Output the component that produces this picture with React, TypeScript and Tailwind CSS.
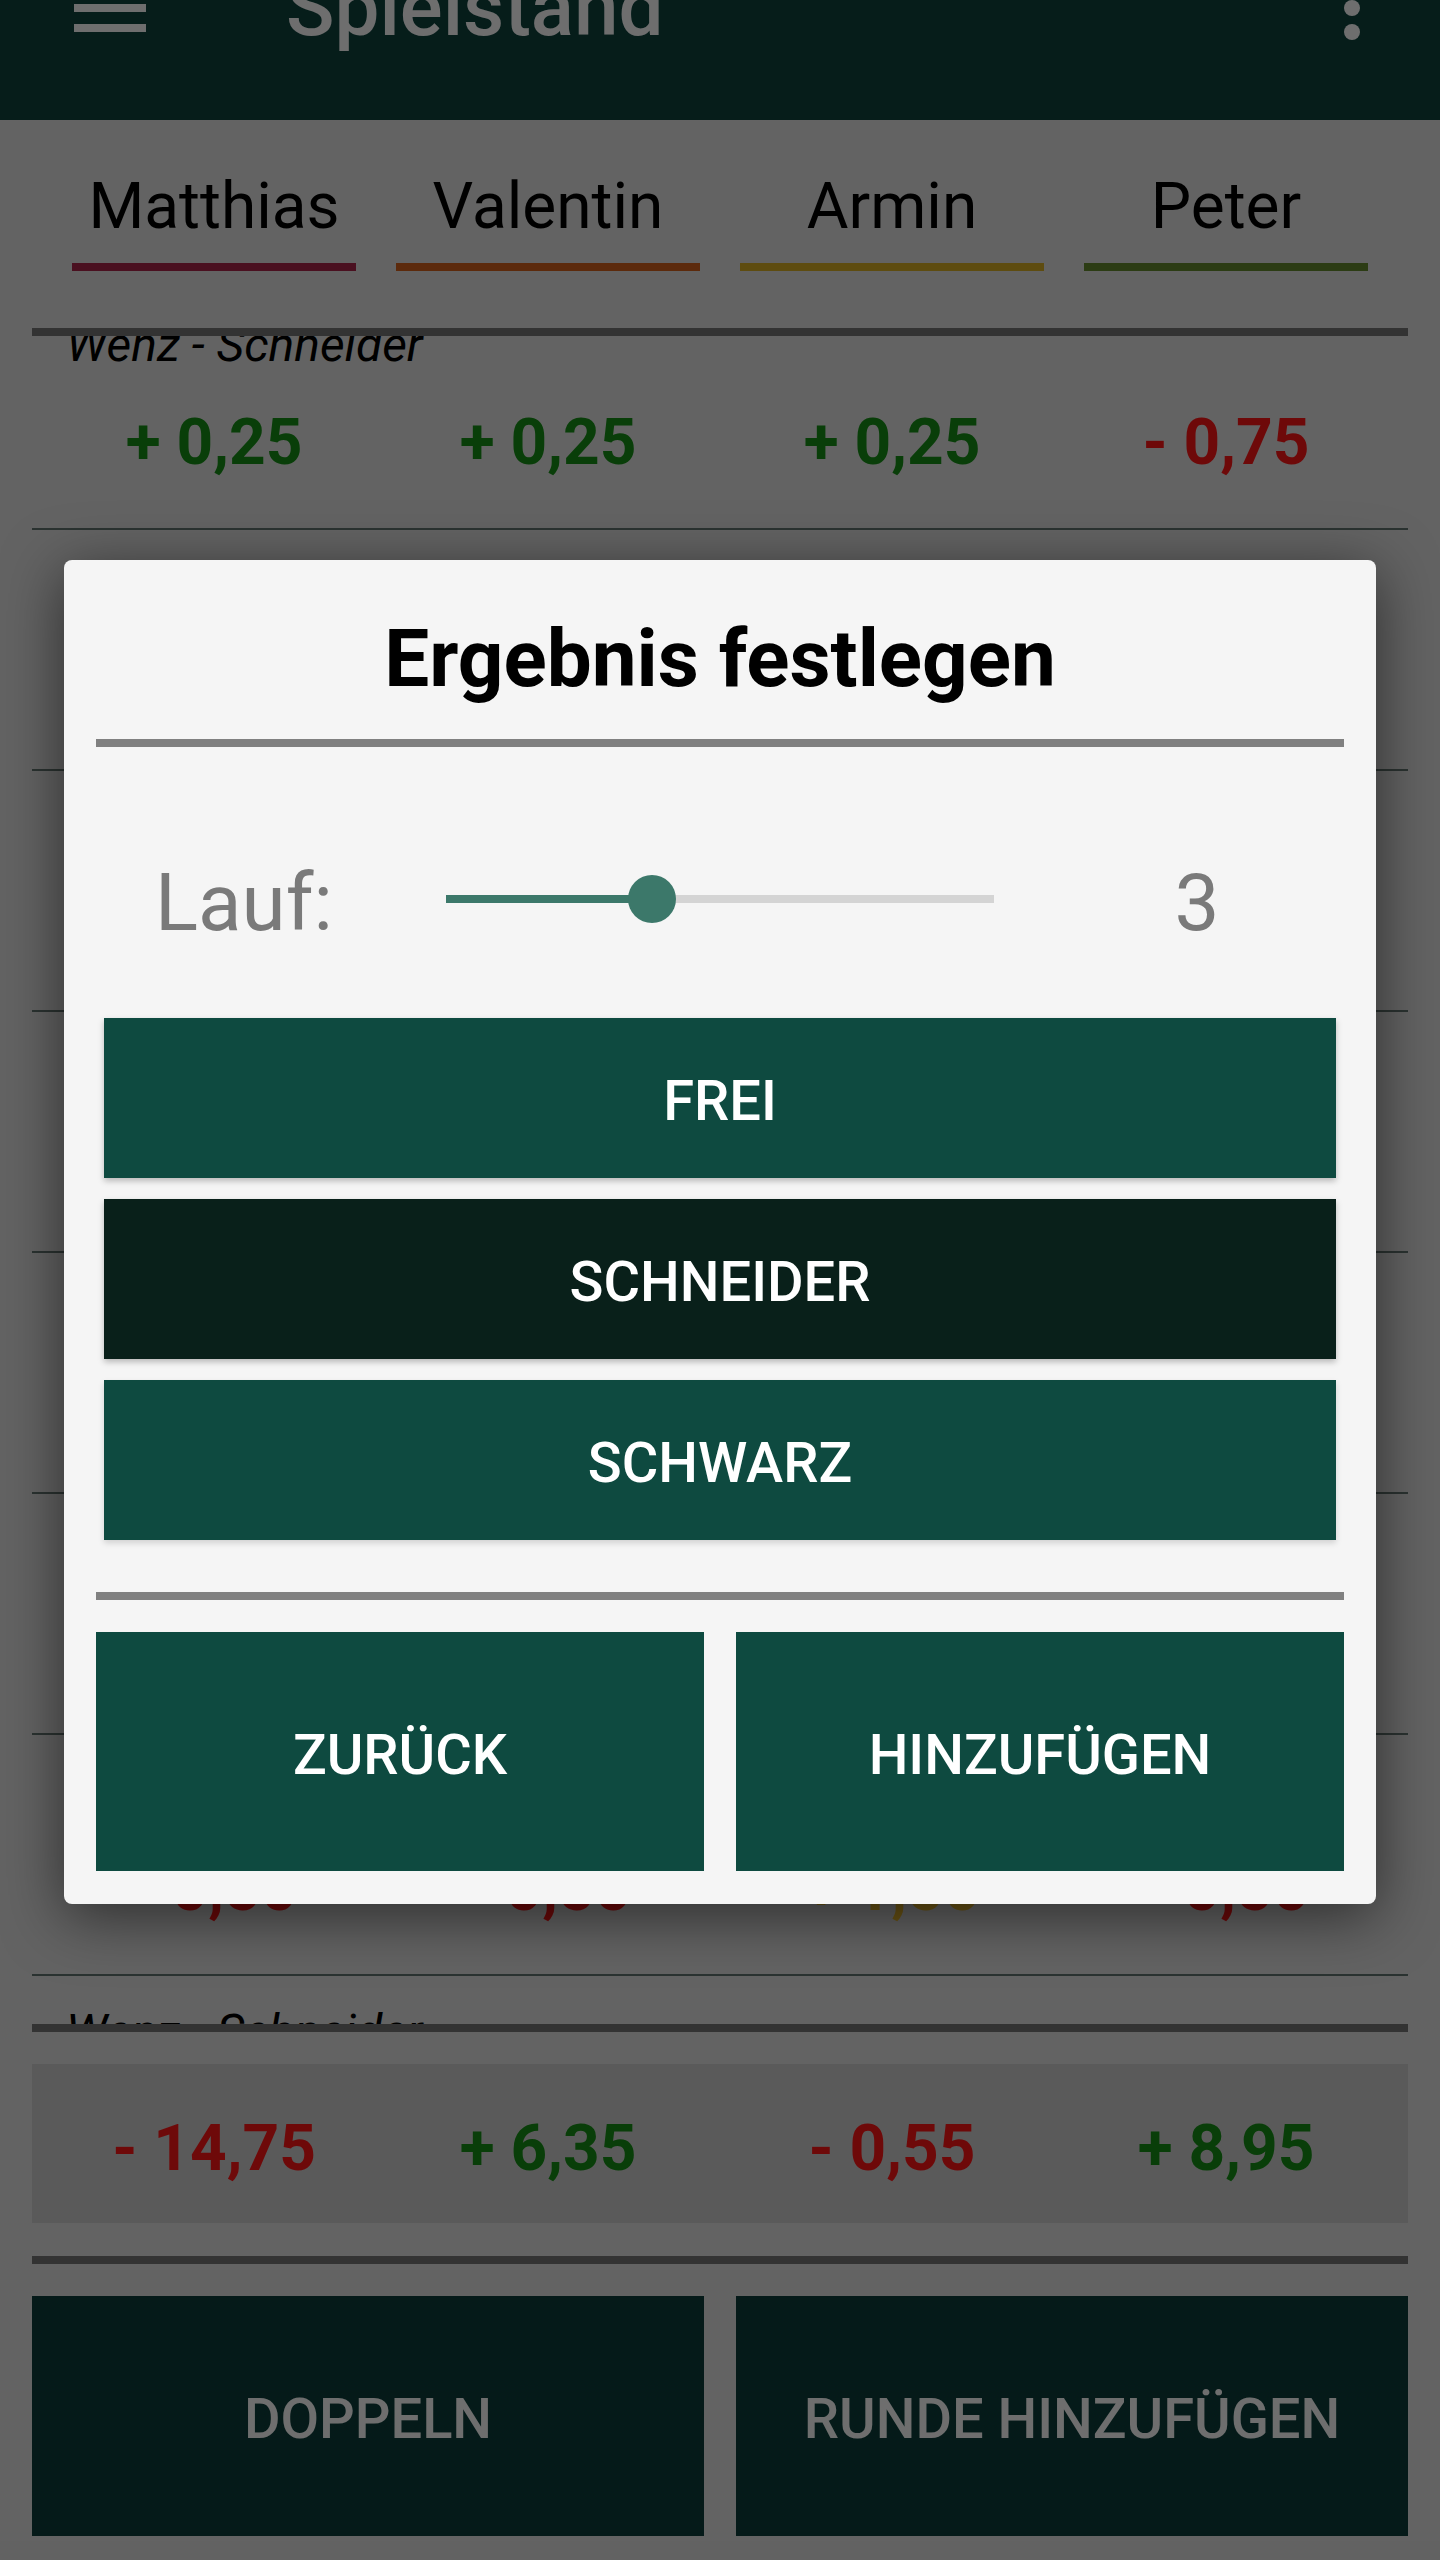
import React from "react";

type Row = { label: string; values: number[]; hl?: number };

const players = [
  { name: "Matthias", line: "bg-[#ac254a]" },
  { name: "Valentin", line: "bg-[#d6621c]" },
  { name: "Armin", line: "bg-[#dbb125]" },
  { name: "Peter", line: "bg-[#668c2f]" },
];

// outer columns get a bit more room at the screen edge
const colPad = ["pl-[40px] pr-[20px]", "px-[20px]", "px-[20px]", "pl-[20px] pr-[40px]"];

const rows: Row[] = [
  { label: "Wenz - Schneider", values: [0.25, 0.25, 0.25, -0.75] },
  { label: "Sauspiel", values: [-0.1, 0.1, 0.1, -0.1] },
  { label: "Solo - Schneider", values: [-0.7, 2.1, -0.7, -0.7] },
  { label: "Sauspiel - Schwarz", values: [0.3, -0.3, -0.3, 0.3] },
  { label: "Wenz", values: [-0.5, -0.5, -0.5, 1.5] },
  { label: "Sauspiel", values: [0.1, -0.1, 0.1, -0.1] },
  { label: "Solo", values: [-0.5, -0.5, 1.5, -0.5], hl: 2 },
  { label: "Wenz - Schneider", values: [0.25, 0.25, -0.75, 0.25] },
];

const totals = [-14.75, 6.35, -0.55, 8.95];

function fmt(v: number) {
  const s = Math.abs(v).toFixed(2).replace(".", ",");
  return (v < 0 ? "- " : "+ ") + s;
}

function tone(v: number, hl: boolean) {
  if (hl) return "text-[#f9c32f]";
  return v < 0 ? "text-[#ff1717]" : "text-[#179017]";
}

function Slider({ value, max }: { value: number; max: number }) {
  const pct = (value / max) * 100;
  return (
    <div className="relative h-[48px] w-[548px] mb-[8px]">
      <div className="absolute left-0 right-0 top-[20px] h-[8px] bg-[#d4d4d4]" />
      <div className="absolute left-0 top-[20px] h-[8px] bg-[#3c786a]" style={{ width: `${pct}%` }} />
      <div
        className="absolute top-0 h-[48px] w-[48px] rounded-full bg-[#3c786a]"
        style={{ left: `calc(${pct}% - 24px)` }}
      />
    </div>
  );
}

const btn = "text-white text-[56px] font-medium pt-[6px]";

export default function App() {
  return (
    <div className="relative h-[2560px] w-full overflow-hidden bg-[#e5e5e5] font-[Roboto] flex flex-col">
      {/* toolbar, partly scrolled off the top */}
      <div className="h-[120px] shrink-0 overflow-hidden bg-[#0e433e]">
        <div className="-mt-[104px] h-[224px] flex items-center">
          <svg width="96" height="96" viewBox="0 0 96 96" className="ml-[62px] shrink-0">
            <rect x="12" y="24" width="72" height="8" fill="#fff" />
            <rect x="12" y="44" width="72" height="8" fill="#fff" />
            <rect x="12" y="64" width="72" height="8" fill="#fff" />
          </svg>
          <div className="ml-[128px] text-[80px] leading-[96px] font-medium text-white">Spielstand</div>
          <svg width="96" height="96" viewBox="0 0 96 96" className="ml-auto mr-[40px] shrink-0">
            <circle cx="48" cy="24" r="8" fill="#fff" />
            <circle cx="48" cy="48" r="8" fill="#fff" />
            <circle cx="48" cy="72" r="8" fill="#fff" />
          </svg>
        </div>
      </div>

      {/* player names */}
      <div className="mx-[32px] pt-[49px] grid grid-cols-4">
        {players.map((p, i) => (
          <div key={p.name} className={colPad[i]}>
            <div className="text-[64px] leading-[76px] text-center text-black">{p.name}</div>
            <div className={`mt-[18px] h-[8px] ${p.line}`} />
          </div>
        ))}
      </div>

      <div className="mx-[32px] mt-[57px] h-[8px] shrink-0 bg-[#777]" />

      {/* round list, scrolled a little */}
      <div className="mx-[32px] h-[1688px] shrink-0 overflow-hidden">
        <div className="-mt-[47px]">
          {rows.map((r, idx) => (
            <div key={idx} className="h-[241px] border-b-2 border-[#647772] pt-[28px]">
              <div className="pl-[34px] text-[48px] leading-[56px] italic text-black">{r.label}</div>
              <div className="mt-[32px] grid grid-cols-4">
                {r.values.map((v, i) => (
                  <div
                    key={i}
                    className={`${colPad[i]} text-center text-[64px] leading-[76px] font-bold ${tone(v, r.hl === i)}`}
                  >
                    {fmt(v)}
                  </div>
                ))}
              </div>
            </div>
          ))}
        </div>
      </div>

      <div className="mx-[32px] h-[8px] shrink-0 bg-[#777]" />

      {/* totals */}
      <div className="mx-[32px] mt-[32px] h-[159px] shrink-0 bg-[#d1d1d1] pt-[45px] grid grid-cols-4">
        {totals.map((v, i) => (
          <div key={i} className={`${colPad[i]} text-center text-[64px] leading-[80px] font-bold ${tone(v, false)}`}>
            {fmt(v)}
          </div>
        ))}
      </div>

      <div className="mx-[32px] mt-[33px] h-[8px] shrink-0 bg-[#777]" />

      <div className="mx-[32px] mt-[32px] h-[240px] shrink-0 flex gap-[32px]">
        <button className={`flex-1 bg-[#0c3e3a] ${btn}`}>DOPPELN</button>
        <button className={`flex-1 bg-[#0c3e3a] ${btn}`}>RUNDE HINZUFÜGEN</button>
      </div>

      {/* dim + dialog */}
      <div className="absolute inset-0 bg-black/57 flex justify-center pt-[560px]">
        <div className="w-[1312px] h-[1344px] bg-[#f5f5f5] rounded-[8px] shadow-[0_12px_60px_rgba(0,0,0,0.55)] flex flex-col px-[32px] pb-[33px]">
          <h2 className="pt-[51px] text-[80px] leading-[96px] font-bold text-center text-black">Ergebnis festlegen</h2>
          <div className="mt-[32px] h-[8px] bg-[#808080]" />

          <div className="mt-[108px] h-[96px] flex items-center">
            <div className="w-[350px] pl-[59px] text-[80px] leading-[96px] text-[#7a7a7a]">Lauf:</div>
            <Slider value={3} max={8} />
            <div className="flex-1 pl-[56px] text-center text-[80px] leading-[96px] text-[#7a7a7a]">3</div>
          </div>

          <div className="mt-[67px] mx-[8px] flex flex-col gap-[21px]">
            <button className={`h-[160px] bg-[#0e4a40] ${btn} shadow-[0_3px_6px_rgba(0,0,0,0.25)]`}>FREI</button>
            <button className={`h-[160px] bg-[#09201a] ${btn} shadow-[0_3px_6px_rgba(0,0,0,0.25)]`}>SCHNEIDER</button>
            <button className={`h-[160px] bg-[#0e4a40] ${btn} shadow-[0_3px_6px_rgba(0,0,0,0.15)]`}>SCHWARZ</button>
          </div>

          <div className="mt-[52px] h-[8px] bg-[#808080]" />

          <div className="mt-[32px] h-[239px] flex gap-[32px]">
            <button className={`flex-1 bg-[#0e4a40] ${btn}`}>ZURÜCK</button>
            <button className={`flex-1 bg-[#0e4a40] ${btn}`}>HINZUFÜGEN</button>
          </div>
        </div>
      </div>
    </div>
  );
}
